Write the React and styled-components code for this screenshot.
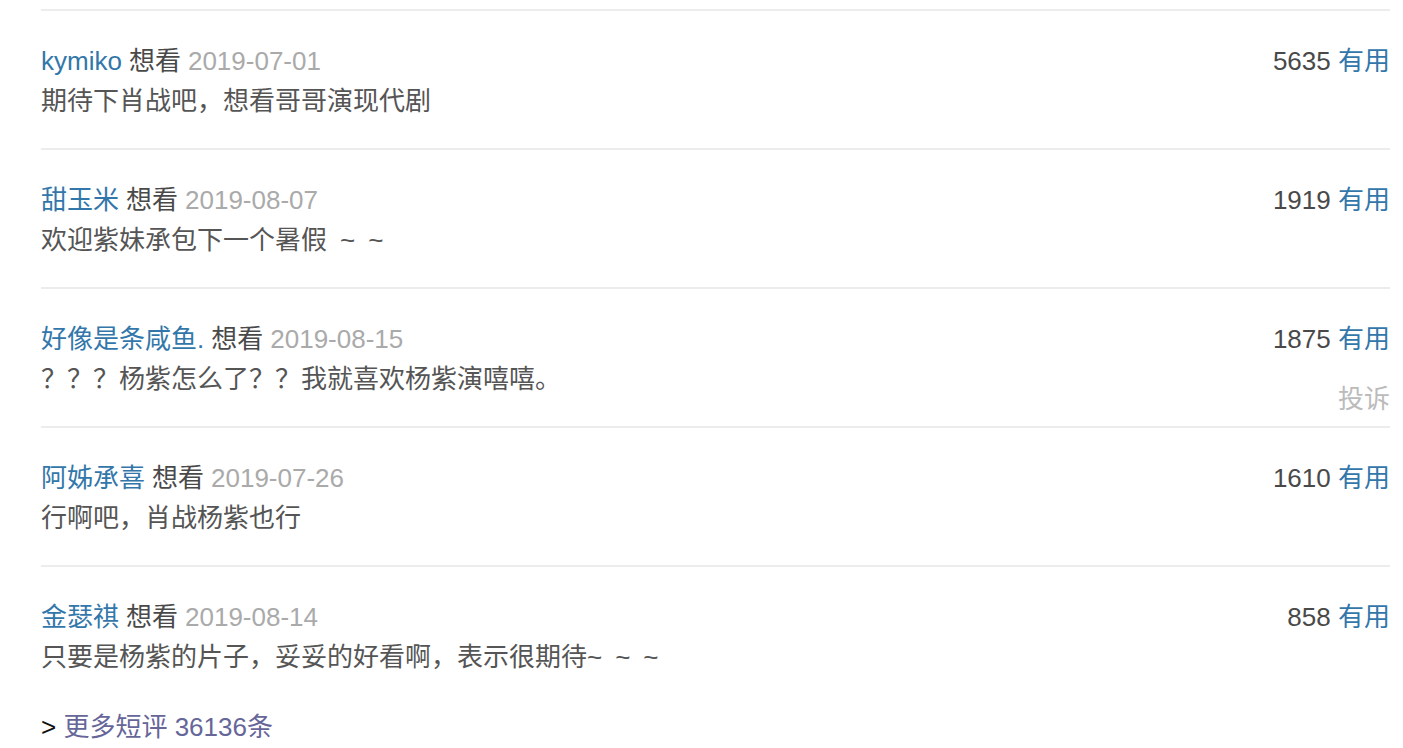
import React from "react";
import styled, { createGlobalStyle } from "styled-components";

const comments = [
  {
    id: 1,
    user: "kymiko",
    status: "想看",
    date: "2019-07-01",
    votes: 5635,
    text: "期待下肖战吧，想看哥哥演现代剧",
  },
  {
    id: 2,
    user: "甜玉米",
    status: "想看",
    date: "2019-08-07",
    votes: 1919,
    text: "欢迎紫妹承包下一个暑假\u2002~\u2002~",
  },
  {
    id: 3,
    user: "好像是条咸鱼.",
    status: "想看",
    date: "2019-08-15",
    votes: 1875,
    text: "？？？杨紫怎么了？？我就喜欢杨紫演嘻嘻。",
    report: true,
  },
  {
    id: 4,
    user: "阿姊承喜",
    status: "想看",
    date: "2019-07-26",
    votes: 1610,
    text: "行啊吧，肖战杨紫也行",
  },
  {
    id: 5,
    user: "金瑟祺",
    status: "想看",
    date: "2019-08-14",
    votes: 858,
    text: "只要是杨紫的片子，妥妥的好看啊，表示很期待~\u2002~\u2002~",
  },
];

const App = () => {
  return (
    <>
      <GlobalStyle />
      <Wrapper>
        <CommentList>
          {comments.map((c) => (
            <Item key={c.id}>
              <Header>
                <Info>
                  <UserLink href="#">{c.user}</UserLink>
                  <Status>{c.status}</Status>
                  <DateText>{c.date}</DateText>
                </Info>
                <Votes>
                  {c.votes} <VoteLink href="#">有用</VoteLink>
                </Votes>
              </Header>
              <Content>{c.text}</Content>
              {c.report ? <Report href="#">投诉</Report> : null}
            </Item>
          ))}
        </CommentList>
        <MoreLine>
          &gt; <MoreLink href="#">更多短评 36136条</MoreLink>
        </MoreLine>
      </Wrapper>
    </>
  );
};

export default App;

const GlobalStyle = createGlobalStyle`
  html, body {
    margin: 0;
    padding: 0;
    background: #fff;
  }
  body {
    font-family: "Liberation Sans", Arial, "Noto Sans CJK SC", sans-serif;
    font-size: 26px;
    line-height: 40px;
    color: #494949;
  }
  a {
    text-decoration: none;
  }
`;

const Wrapper = styled.section`
  padding: 9px 13px 0 41px;
`;

const CommentList = styled.div`
  display: flex;
  flex-direction: column;
`;

const Item = styled.div`
  position: relative;
  border-top: 2px solid #ececec;
  padding: 30px 0 27px;
`;

const Header = styled.div`
  display: flex;
  justify-content: space-between;
  align-items: center;
  height: 40px;
`;

const Info = styled.div`
  display: flex;
  gap: 7px;
  white-space: nowrap;
`;

const UserLink = styled.a`
  color: #3377aa;
`;

const Status = styled.span`
  color: #494949;
`;

const DateText = styled.span`
  color: #aaa;
`;

const Votes = styled.span`
  color: #494949;
`;

const VoteLink = styled.a`
  color: #3377aa;
`;

const Content = styled.p`
  margin: 0;
  color: #555;
`;

const Report = styled.a`
  position: absolute;
  right: 0;
  top: 90px;
  color: #bbb;
`;

const MoreLine = styled.div`
  color: #111;
  height: 40px;
  margin-top: 3px;
`;

const MoreLink = styled.a`
  color: #666699;
`;
